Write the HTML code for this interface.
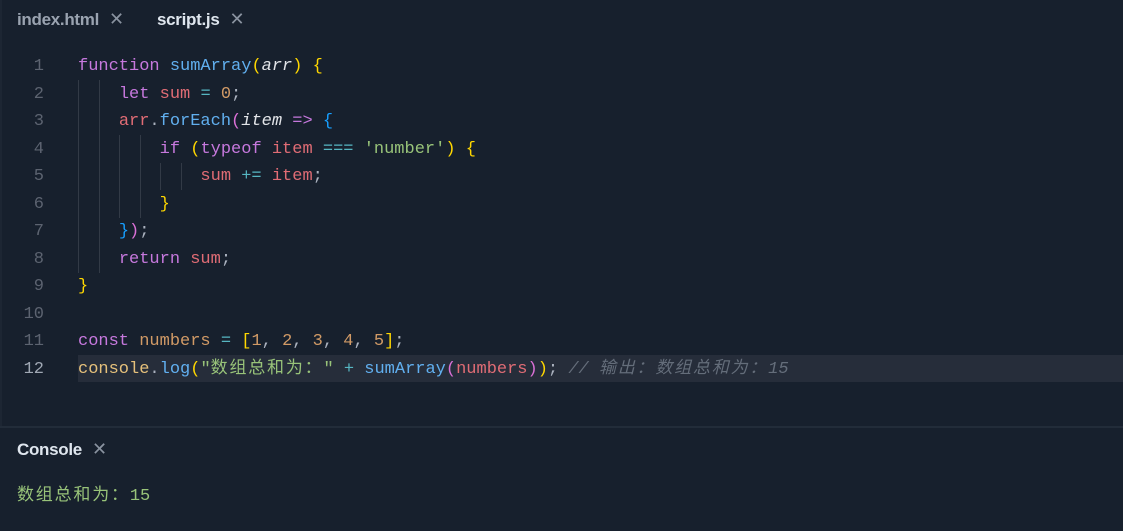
<!DOCTYPE html>
<html><head><meta charset="utf-8"><style>
body{margin:0;width:1123px;height:531px;background:#17202d;overflow:hidden;position:relative;font-family:"Liberation Sans",sans-serif}
.tab{position:absolute;top:9px;font-size:17px;font-weight:bold;letter-spacing:-0.3px}
.x{font-weight:normal;color:#8a93a0;margin-left:10px;font-size:18px}
.code{position:absolute;left:0;top:53px;font-family:"Liberation Mono","Noto Sans CJK SC",monospace;font-size:17px}
.ln{position:absolute;height:27.5px;line-height:27.5px;white-space:pre}
.num{position:absolute;width:44px;text-align:right;color:#5c6370}
.txt{position:absolute;left:78px}
.g{position:absolute;width:1px;background:#323a46;height:27.5px}
.cj{letter-spacing:1.8px}
.k{color:#c678dd}.f{color:#61afef}.p{color:#e2e4e8;font-style:italic}.b{color:#ffd700}.v{color:#e06c75}.n{color:#d19a66}.s{color:#98c379}.o{color:#56b6c2}.c{color:#646d7a;font-style:italic}.y{color:#e5c07b}.w{color:#abb2bf}.m{color:#da70d6}.bl{color:#179fff}
</style></head><body>
<div class="tab" style="left:17px;color:#9aa3b0">index.html<span class="x">✕</span></div>
<div class="tab" style="left:157px;color:#dfe6ee">script.js<span class="x">✕</span></div>
<div style="position:absolute;left:78px;top:355px;width:1045px;height:27px;background:#262d3a"></div>
<div class="code">
<div class="ln" style="top:0"><span class="num">1</span><span class="txt"><span class="k">function</span> <span class="f">sumArray</span><span class="b">(</span><span class="p">arr</span><span class="b">)</span> <span class="b">{</span></span></div>
<div class="ln" style="top:27.5px"><span class="num">2</span><span class="txt">    <span class="k">let</span> <span class="v">sum</span> <span class="o">=</span> <span class="n">0</span><span class="w">;</span></span></div>
<div class="ln" style="top:55px"><span class="num">3</span><span class="txt">    <span class="v">arr</span><span class="w">.</span><span class="f">forEach</span><span class="m">(</span><span class="p">item</span> <span class="k">=&gt;</span> <span class="bl">{</span></span></div>
<div class="ln" style="top:82.5px"><span class="num">4</span><span class="txt">        <span class="k">if</span> <span class="b">(</span><span class="k">typeof</span> <span class="v">item</span> <span class="o">===</span> <span class="s">'number'</span><span class="b">)</span> <span class="b">{</span></span></div>
<div class="ln" style="top:110px"><span class="num">5</span><span class="txt">            <span class="v">sum</span> <span class="o">+=</span> <span class="v">item</span><span class="w">;</span></span></div>
<div class="ln" style="top:137.5px"><span class="num">6</span><span class="txt">        <span class="b">}</span></span></div>
<div class="ln" style="top:165px"><span class="num">7</span><span class="txt">    <span class="bl">}</span><span class="m">)</span><span class="w">;</span></span></div>
<div class="ln" style="top:192.5px"><span class="num">8</span><span class="txt">    <span class="k">return</span> <span class="v">sum</span><span class="w">;</span></span></div>
<div class="ln" style="top:220px"><span class="num">9</span><span class="txt"><span class="b">}</span></span></div>
<div class="ln" style="top:247.5px"><span class="num">10</span></div>
<div class="ln" style="top:275px"><span class="num">11</span><span class="txt"><span class="k">const</span> <span class="n">numbers</span> <span class="o">=</span> <span class="b">[</span><span class="n">1</span><span class="w">,</span> <span class="n">2</span><span class="w">,</span> <span class="n">3</span><span class="w">,</span> <span class="n">4</span><span class="w">,</span> <span class="n">5</span><span class="b">]</span><span class="w">;</span></span></div>
<div class="ln" style="top:302.5px"><span class="num" style="color:#a0a8b4">12</span><span class="txt"><span class="y">console</span><span class="w">.</span><span class="f">log</span><span class="b">(</span><span class="s">"<span class="cj">数组总和为：</span>"</span> <span class="o">+</span> <span class="f">sumArray</span><span class="m">(</span><span class="v">numbers</span><span class="m">)</span><span class="b">)</span><span class="w">;</span> <span class="c">// <span class="cj">输出：数组总和为：</span>15</span></span></div>
</div>
<div class="g" style="left:78px;top:80px;height:193px"></div>
<div class="g" style="left:99px;top:80px;height:193px"></div>
<div class="g" style="left:119px;top:135px;height:83px"></div>
<div class="g" style="left:140px;top:135px;height:83px"></div>
<div class="g" style="left:160px;top:163px;height:27px"></div>
<div class="g" style="left:181px;top:163px;height:27px"></div>
<div style="position:absolute;left:0;top:426px;width:1123px;height:2px;background:#222c39"></div>
<div style="position:absolute;left:0;top:0;width:2px;height:426px;background:#1d2633"></div>
<div class="tab" style="left:17px;top:439px;color:#dfe6ee">Console<span class="x">✕</span></div>
<div style="position:absolute;left:17px;top:480px;font-family:'Liberation Mono','Noto Sans CJK SC',monospace;font-size:17px;color:#98c379"><span class="cj">数组总和为：</span>15</div>
</body></html>
